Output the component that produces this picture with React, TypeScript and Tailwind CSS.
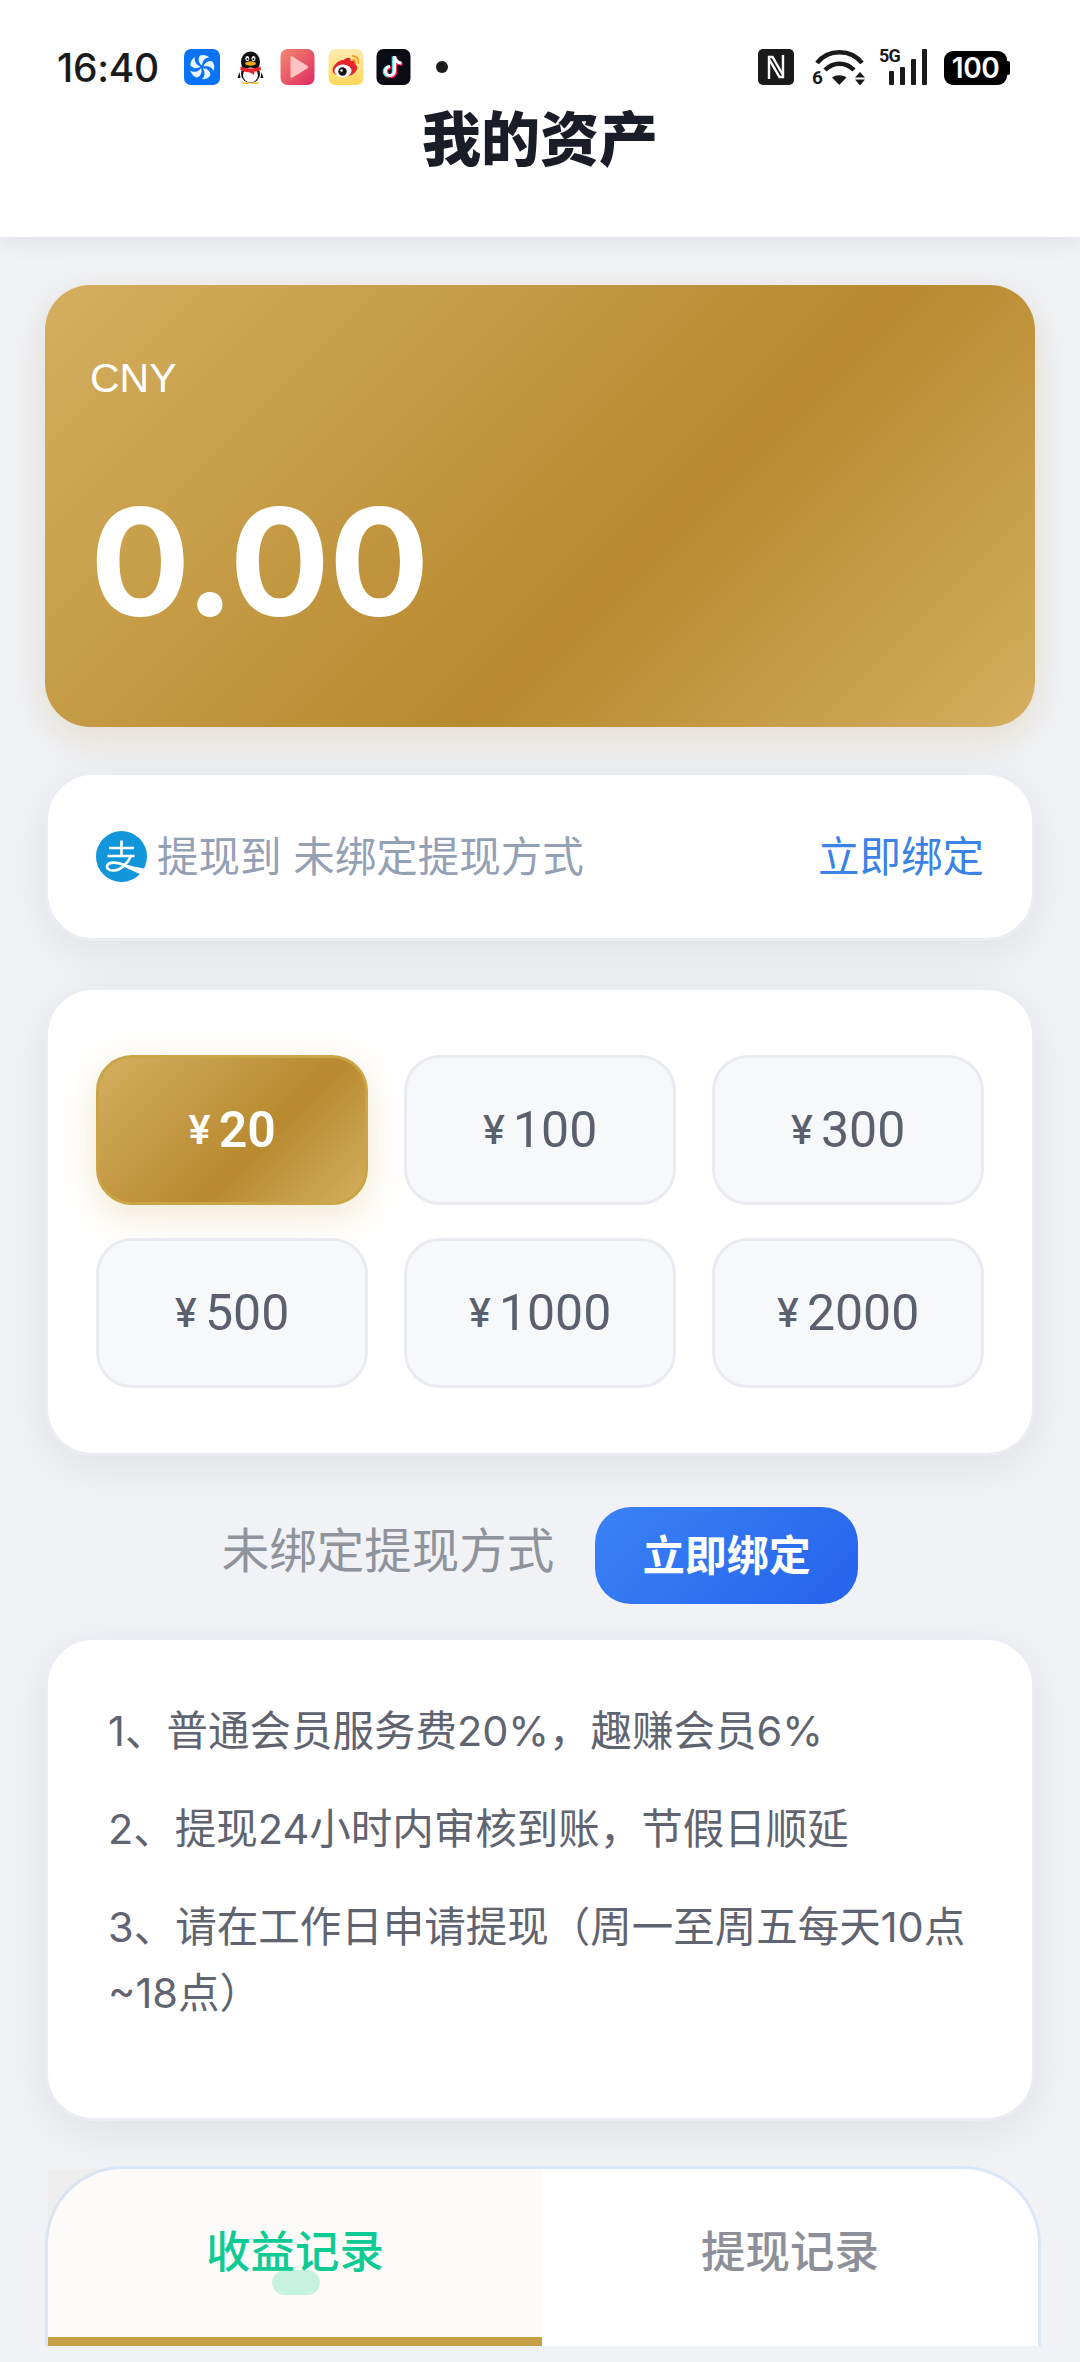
import React from "react";

const cjk = "font-['Inter','Noto_Sans_CJK_SC',sans-serif]";

const amounts = ["20", "100", "300", "500", "1000", "2000"];

const goldGradient = "bg-[linear-gradient(135deg,#d4af5f_0%,#b8892f_60%,#d4af5f_100%)]";

const AppIcons = () => (
  <div className="flex items-center">
    {/* pinwheel */}
    <svg width="36" height="36" viewBox="0 0 36 36" className="ml-[25px]">
      <rect width="36" height="36" rx="7" fill="#0a72f5" />
      <g fill="#e8f4ff">
        {[0, 72, 144, 216, 288].map((r) => (
          <path key={r} d="M18 16.500C14.500 14 13.500 9.500 16 6.500c3-1.200 7-.5 9.500 2-3.500-.5-7 2.500-7.500 8z" transform={`rotate(${r} 18 18)`} />
        ))}
      </g>
    </svg>
    {/* penguin */}
    <svg width="27" height="33" viewBox="0 0 26 33" className="ml-[17px]">
      <ellipse cx="13" cy="11" rx="9.500" ry="10.500" fill="#111" />
      <ellipse cx="13" cy="23" rx="9.500" ry="9" fill="#111" />
      <path d="M2 21L0 27l3 0zM24 21l2 6-3 0z" fill="#111" />
      <ellipse cx="13" cy="24" rx="7.500" ry="7.500" fill="#fff" />
      <ellipse cx="9.800" cy="7.500" rx="2" ry="2.600" fill="#fff" />
      <ellipse cx="16" cy="7.500" rx="2" ry="2.600" fill="#fff" />
      <circle cx="10" cy="8" r="1" fill="#111" />
      <circle cx="16" cy="8" r="1" fill="#111" />
      <ellipse cx="13" cy="12.500" rx="5.500" ry="2.200" fill="#f5a818" />
      <path d="M3 15.500c6 2.500 14 2.500 20 0l.5 3.500c-3 1-5 1.500-6.500 1.500l-.5 3.500-4-2.500c-3 0-7-1-9.500-2.500z" fill="#e5262a" />
      <path d="M5 31.500h7l-1 1.500H5zM14 31.500h7v1.500h-6z" fill="#f5b324" />
    </svg>
    {/* video */}
    <svg width="35" height="36" viewBox="0 0 34 36" className="ml-[16px]">
      <defs>
        <linearGradient id="vid" x1="0" y1="0" x2="1" y2="1">
          <stop offset="0" stopColor="#f48a6f" />
          <stop offset="1" stopColor="#dd2a62" />
        </linearGradient>
      </defs>
      <rect width="34" height="36" rx="7" fill="url(#vid)" />
      <path d="M10 8.500c0-1 1-1.500 2-1l15 9.500c1 .6 1 1.600 0 2.200l-15 9.300c-1 .6-2 0-2-1z" fill="#ffc4c2" />
    </svg>
    {/* weibo */}
    <svg width="36" height="36" viewBox="0 0 35 36" className="ml-[13px]">
      <defs>
        <linearGradient id="wb" x1="0" y1="0" x2="0" y2="1">
          <stop offset="0" stopColor="#ffecb0" />
          <stop offset="1" stopColor="#ffd75c" />
        </linearGradient>
      </defs>
      <rect width="35" height="36" rx="7" fill="url(#wb)" />
      <path d="M15 11c4-3 8-3 7 1 4-1 6 1 5 4 3 1 2 5-1 8-4 4-13 5-18 2-5-2-5-7-1-11 3-3 5-4 8-4z" fill="#e6262c" />
      <ellipse cx="14.500" cy="22" rx="8.500" ry="6.500" fill="#fff" />
      <circle cx="14" cy="22.500" r="4.200" fill="#111" />
      <circle cx="13" cy="21.500" r="1.200" fill="#fff" />
      <path d="M24 7c4 0 6 3 6 7M24.500 11c2 0 2.500 1.500 2.500 3" stroke="#f5a01d" strokeWidth="1.800" fill="none" strokeLinecap="round" />
    </svg>
    {/* tiktok */}
    <svg width="35" height="36" viewBox="0 0 34 36" className="ml-[12px]">
      <rect width="34" height="36" rx="7" fill="#0b0b16" />
      <path d="M18 7v15a4.500 4.500 0 1 1-4.500-4.500M18 7c0 4 3 7 7 7" stroke="#31e6e0" strokeWidth="3.600" fill="none" transform="translate(-1 .5)" />
      <path d="M18 7v15a4.500 4.500 0 1 1-4.500-4.500M18 7c0 4 3 7 7 7" stroke="#f0194f" strokeWidth="3.600" fill="none" transform="translate(1 1)" />
      <path d="M18 7v15a4.500 4.500 0 1 1-4.500-4.500M18 7c0 4 3 7 7 7" stroke="#fff" strokeWidth="3.200" fill="none" />
    </svg>
    <span className="ml-[25px] size-[12px] rounded-full bg-[#1a1a1a]" />
  </div>
);

const SystemIcons = () => (
  <div className="flex items-center">
    {/* NFC */}
    <svg width="36" height="36" viewBox="0 0 36 36">
      <rect width="36" height="36" rx="5" fill="#1a1a1a" />
      <path d="M11 30V8h3.500L25 26" stroke="#fff" strokeWidth="2.400" fill="none" />
      <path d="M25 6v22h-3.500L11 10" stroke="#fff" strokeWidth="2.400" fill="none" />
    </svg>
    {/* wifi 6 */}
    <div className="relative ml-[20px] h-[36px] w-[51px]">
      <svg width="51" height="36" viewBox="0 0 51 36" className="absolute top-0 left-0">
        <path d="M3 14C14 -0.500 37 -0.500 48 14" stroke="#1a1a1a" strokeWidth="4.500" fill="none" />
        <path d="M11 21C19 12.500 32 12.500 40 21" stroke="#1a1a1a" strokeWidth="4.500" fill="none" />
        <path d="M18 28.500c3.500-3 11-3 14.500 0L25.250 36z" fill="#1a1a1a" />
        <path d="M46 23l5 5.500H41zM46 36.500l5-6H41z" fill="#1a1a1a" />
      </svg>
      <span className="absolute bottom-[-3px] left-[-2px] font-['Roboto',sans-serif] text-[19px] leading-[20px] font-bold text-[#1a1a1a]">6</span>
    </div>
    {/* 5G signal */}
    <div className="relative ml-[14px] h-[36px] w-[48px]">
      <span className="absolute top-[-3px] left-0 font-['Roboto',sans-serif] text-[18px] leading-[20px] font-bold tracking-[-0.8px] text-[#1a1a1a]">5G</span>
      <div className="absolute right-0 bottom-0 flex items-end gap-[6px]">
        <span className="h-[14px] w-[5px] rounded-[1px] bg-[#1a1a1a]" />
        <span className="h-[18px] w-[5px] rounded-[1px] bg-[#1a1a1a]" />
        <span className="h-[26px] w-[5px] rounded-[1px] bg-[#1a1a1a]" />
        <span className="h-[36px] w-[5px] rounded-[1px] bg-[#1a1a1a]" />
      </div>
    </div>
    {/* battery */}
    <div className="mt-[2px] ml-[17px] flex items-center">
      <div className="flex h-[34px] w-[63px] items-center justify-center rounded-[9px] bg-black font-['Inter',sans-serif] text-[28px] leading-none font-semibold tracking-[-0.5px] text-white">
        100
      </div>
      <span className="h-[14px] w-[3px] rounded-r-[2px] bg-black" />
    </div>
  </div>
);

const AlipayIcon = () => (
  <svg width="51" height="51" viewBox="0 0 51 51" className="shrink-0">
    <circle cx="25.500" cy="25.500" r="25.500" fill="#1296db" />
    <path d="M13 17h25M25.500 9.500v15M11.500 25h27" stroke="#fff" strokeWidth="2.600" fill="none" />
    <path d="M35 25c-3 7-10 14-17 14.500-6 .5-8-3-6.500-5.500 2-3.500 10-3 18 .5" stroke="#fff" strokeWidth="2.600" fill="none" />
    <path d="M27 32.500c8 2.500 15 4 23 5.500l-3.500 6.500C40 41 33 38 27 35.500z" fill="#fff" />
  </svg>
);

const App = () => {
  return (
    <div className={`h-[2362px] w-[1080px] overflow-hidden bg-[#f0f2f6] ${cjk}`}>
      {/* Header */}
      <header className="h-[237px] bg-white pt-[49px] shadow-[0_4px_24px_rgba(0,0,0,0.08)]">
        <div className="flex h-[36px] items-center justify-between pr-[70px] pl-[57px]">
          <div className="flex items-center">
            <span className="text-[39px] leading-none font-medium tracking-[-0.3px] text-[#1a1a1a]">16:40</span>
            <AppIcons />
          </div>
          <SystemIcons />
        </div>
        <h1 className="mt-[13px] text-center text-[59px] leading-[84px] font-extrabold text-[#1a1c28]">我的资产</h1>
      </header>

      <main className="px-[45px] pt-[48px]">
        {/* Balance */}
        <section className={`h-[442px] w-[990px] rounded-[45px] ${goldGradient} px-[45px] pt-[66px] shadow-[0_12px_40px_rgba(184,137,47,0.2)]`}>
          <div className="font-['Liberation_Sans',sans-serif] text-[41px] leading-[54px] text-white">CNY</div>
          <div className="mt-[66px] text-[149px] leading-[182px] font-bold tracking-[-1px] text-white">0.00</div>
        </section>

        {/* Bind row */}
        <section className="mt-[45px] flex h-[169px] w-[990px] items-center justify-between rounded-[48px] border-[3px] border-[#ebedf2] bg-white pr-[48px] pl-[48px] shadow-[0_12px_48px_rgba(0,0,0,0.07)]">
          <div className="flex items-center gap-[10px]">
            <AlipayIcon />
            <span className="text-[41.500px] leading-[60px] text-[#94a0b4]">提现到 未绑定提现方式</span>
          </div>
          <span className="text-[41.500px] leading-[60px] text-[#3b82e6]">立即绑定</span>
        </section>

        {/* Amounts */}
        <section className="mt-[46px] h-[469px] w-[990px] rounded-[48px] border-[3px] border-[#ebedf2] bg-white px-[48px] pt-[65px] shadow-[0_12px_48px_rgba(0,0,0,0.07)]">
          <div className="grid grid-cols-3 gap-x-[36px] gap-y-[33px]">
            {amounts.map((a, i) => (
              <button
                key={a}
                className={
                  i === 0
                    ? `flex h-[150px] items-center justify-center gap-[8px] rounded-[36px] border-[3px] border-[#c9a548] ${goldGradient} text-white shadow-[0_10px_36px_rgba(212,175,95,0.3)]`
                    : "flex h-[150px] items-center justify-center gap-[8px] rounded-[36px] border-[3px] border-[#e9ebf0] bg-[#f6f8fa] text-[#5b606e]"
                }
              >
                <span className={`text-[40px] leading-none ${i === 0 ? "font-semibold" : "font-medium"}`}>¥</span>
                <span className={`font-['Roboto',sans-serif] text-[50px] leading-none ${i === 0 ? "font-semibold" : "font-[450]"}`}>{a}</span>
              </button>
            ))}
          </div>
        </section>

        {/* Hint */}
        <section className="mt-[51px] flex h-[97px] items-center justify-center gap-[41px]">
          <span className="mb-[10px] text-[47.500px] leading-[60px] text-[#8f939b]">未绑定提现方式</span>
          <button className="h-[97px] w-[263px] rounded-[36px] bg-[linear-gradient(135deg,#3b82f6,#2563eb)] text-[42px] font-bold text-white">
            立即绑定
          </button>
        </section>

        {/* Rules */}
        <section className="mt-[33px] h-[484px] w-[990px] rounded-[48px] border-[3px] border-[#ebedf2] bg-white px-[60px] pt-[58px] text-[41.500px] leading-[66px] text-[#5f6470] shadow-[0_12px_48px_rgba(0,0,0,0.07)]">
          <p>1、普通会员服务费20%，趣赚会员6%</p>
          <p className="mt-[32px]">2、提现24小时内审核到账，节假日顺延</p>
          <p className="mt-[32px]">3、请在工作日申请提现（周一至周五每天10点~18点）</p>
        </section>

        {/* Tabs */}
        <section className="mt-[45px] flex h-[180px] w-[996px] rounded-t-[78px] border-[3px] border-b-0 border-[#dbe6f8] bg-white">
          <div className="relative flex h-full w-[494px] justify-center bg-[rgba(200,160,70,0.04)] pt-[51px]">
            <span className="absolute top-[101px] left-[224px] h-[25px] w-[48px] rounded-full bg-[#c8f2e0]" />
            <span className="relative text-[44.500px] leading-[64px] font-medium text-[#0ecb93]">收益记录</span>
            <span className="absolute bottom-0 left-0 h-[9px] w-full bg-[#c6a047]" />
          </div>
          <div className="flex h-full flex-1 justify-center pt-[51px]">
            <span className="text-[44.500px] leading-[64px] font-medium text-[#8e9099]">提现记录</span>
          </div>
        </section>
      </main>
    </div>
  );
};

export default App;
